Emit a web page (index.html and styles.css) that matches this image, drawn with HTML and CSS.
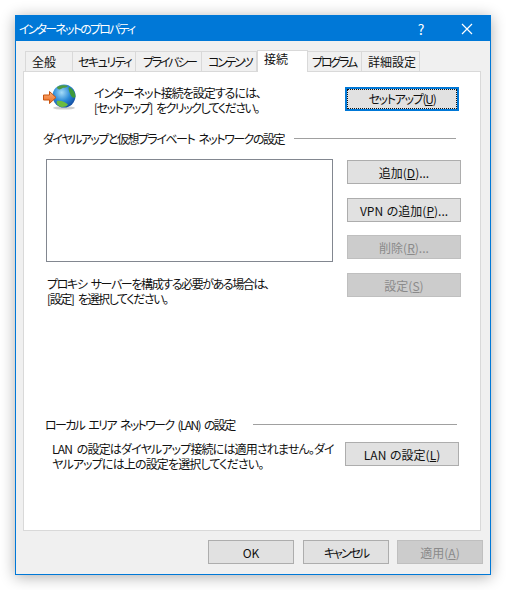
FILE: index.html
```html
<!DOCTYPE html>
<html lang="ja">
<head>
<meta charset="utf-8">
<title>インターネットのプロパティ</title>
<link rel="stylesheet" href="styles.css">
</head>
<body>
<div class="window">
  <header class="titlebar">
    <span class="title">インターネットのプロパティ</span>
    <span class="help">?</span>
    <svg class="close" width="12" height="12" viewBox="0 0 12 12"><path d="M1 1L11 11M11 1L1 11" stroke="#fff" stroke-width="1.2" fill="none"/></svg>
  </header>
  <div class="client">
    <nav class="tabs">
      <span class="tab t1">全般</span>
      <span class="tab t2">セキュリティ</span>
      <span class="tab t3">プライバシー</span>
      <span class="tab t4">コンテンツ</span>
      <span class="tab t5 active">接続</span>
      <span class="tab t6">プログラム</span>
      <span class="tab t7">詳細設定</span>
    </nav>
    <main class="panel">
      <section class="setup">
        <svg class="globe" width="34" height="30" viewBox="0 0 34 30">
          <defs>
            <radialGradient id="sea" cx="0.4" cy="0.35" r="0.75">
              <stop offset="0" stop-color="#a5dcf8"/>
              <stop offset="0.5" stop-color="#2b8ad8"/>
              <stop offset="1" stop-color="#0d3f96"/>
            </radialGradient>
            <linearGradient id="arrow" x1="0" y1="0" x2="0" y2="1">
              <stop offset="0" stop-color="#fbb27c"/>
              <stop offset="1" stop-color="#ee6a1e"/>
            </linearGradient>
          </defs>
          <ellipse cx="22" cy="25" rx="11" ry="1.6" fill="#cfcfcf"/>
          <circle cx="22" cy="13" r="11.5" fill="url(#sea)"/>
          <path d="M15 4C18 2 23 1.5 26 3C24 5.5 21 4 19 6C17 7 15 6 15 4Z" fill="#4f9a3f"/>
          <path d="M27 4C31 6 33.5 10 33.5 14C31.5 16 29 14 28 10.5C27 8 26 6 27 4Z" fill="#3f9a3a"/>
          <path d="M15 18C19 17 24 19.5 26 21.5C24 24.5 19 24.5 17 23C15 22 14 20 15 18Z" fill="#6cbb3f"/>
          <path d="M1.5 12H7.5V8.5L14 14.5L7.5 20.5V17H1.5Z" fill="url(#arrow)" stroke="#c9540f" stroke-width="1"/>
        </svg>
        <p class="setup-text">インターネット接続を設定するには、<br><span class="tight">[セットアップ] をクリックしてください。</span></p>
        <button class="btn wide focused" type="button"><span class="focus">セットアップ(<u>U</u>)</span></button>
      </section>

      <div class="group dial-head"><span>ダイヤルアップと仮想プライベート ネットワークの設定</span><i class="rule"></i></div>

      <section class="dial">
        <div class="dial-left">
          <div class="listbox"></div>
          <p class="proxy">プロキシ サーバーを構成する必要がある場合は、<br>[設定] を選択してください。</p>
        </div>
        <div class="dial-buttons">
          <button class="btn side" type="button">追加(<u>D</u>)...</button>
          <button class="btn side" type="button">VPN の追加(<u>P</u>)...</button>
          <button class="btn side off" type="button">削除(<u>R</u>)...</button>
          <button class="btn side off" type="button">設定(<u>S</u>)</button>
        </div>
      </section>

      <div class="group lan-head"><span>ローカル エリア ネットワーク (LAN) の設定</span><i class="rule"></i></div>

      <section class="lan">
        <p class="lan-text">LAN の設定はダイヤルアップ接続には適用されません。ダイ<br>ヤルアップには上の設定を選択してください。</p>
        <button class="btn wide" type="button">LAN の設定(<u>L</u>)</button>
      </section>
    </main>
    <footer class="actions">
      <button class="btn act" type="button">OK</button>
      <button class="btn act cancel" type="button">キャンセル</button>
      <button class="btn act off" type="button">適用(<u>A</u>)</button>
    </footer>
  </div>
</div>
</body>
</html>
```
FILE: styles.css
```css
* { box-sizing: border-box; }
html, body { margin: 0; padding: 0; background: #fff; }
body {
  width: 506px;
  height: 590px;
  padding: 15px;
  overflow: hidden;
  font-family: "Noto Sans CJK JP", "Noto Sans", sans-serif;
  font-feature-settings: "palt";
  font-size: 12px;
  line-height: 15px;
  color: #111;
  word-spacing: 3px;
}
p { margin: 0; }
.window {
  width: 476px;
  height: 560px;
  border: 1px solid #0078d7;
  background: #f0f0f0;
  box-shadow: 0 2px 14px rgba(0,0,0,.32);
  display: flex;
  flex-direction: column;
}
.titlebar {
  height: 25px;
  background: #0078d7;
  color: #fff;
  display: flex;
  align-items: center;
  padding-left: 3px;
  flex: none;
}
.title { flex: 1; letter-spacing: -1.8px; }
.help { width: 14px; font-size: 14px; margin-right: 33px; margin-top: 2px; text-align: center; }
.close { margin-right: 17px; }
.client { flex: 1; display: flex; flex-direction: column; padding: 10px 9px 9px 7px; }
.tabs { display: flex; height: 20px; align-items: flex-end; padding-left: 2px; position: relative; z-index: 1; }
.tab {
  height: 20px;
  border: 1px solid #d9d9d9;
  border-left: 0;
  border-bottom: 0;
  padding-left: 7px;
  line-height: 19px;
  background: #f0f0f0;
  white-space: nowrap;
}
.tab:first-child { border-left: 1px solid #d9d9d9; }
.t1 { width: 48px; padding-left: 6px; }
.t2 { width: 63px; letter-spacing: -1.5px; padding-left: 5px; }
.t3 { width: 66px; letter-spacing: -2.2px; }
.t4 { width: 55px; letter-spacing: -2.3px; padding-left: 6px; }
.t5 { width: 51px; height: 22px; margin-bottom: -1px; background: #fff; border-left: 1px solid #d9d9d9; padding-left: 6px; line-height: 16px; }
.t6 { width: 54px; letter-spacing: -2.2px; padding-left: 4px; }
.t7 { width: 58px; padding-left: 6px; }
.panel {
  width: 458px;
  height: 460px;
  background: #fff;
  border: 1px solid #d9d9d9;
  padding: 15px 21px 0 18px;
}
.btn {
  display: block;
  font: inherit;
  font-feature-settings: "palt";
  color: #111;
  background: #e1e1e1;
  border: 1px solid #adadad;
  border-radius: 0;
  padding: 0;
  margin: 0;
  height: 24px;
  text-align: center;
  white-space: nowrap;
  word-spacing: 1px;
}
.btn u { text-underline-offset: 1px; }
.btn.off { background: #cccccc; border-color: #bfbfbf; color: #8a8a8a; }
.wide { width: 114px; }
.focused { border: 2px solid #0078d7; padding: 0; }
.focus { display: block; height: 20px; line-height: 17px; border: 1px dotted #111; letter-spacing: -1.3px; }
.setup { display: flex; align-items: flex-start; }
.globe { margin-top: -4px; flex: none; }
.setup-text { margin-left: 18px; margin-top: -2px; width: 251px; flex: none; white-space: nowrap; letter-spacing: -1px; }
.tight { letter-spacing: -1.5px; }
.group { display: flex; align-items: center; }
.group span { white-space: nowrap; }
.rule { flex: 1; height: 1px; background: #a0a0a0; margin-left: 10px; }
.dial-head { margin-top: 16px; margin-left: 1px; margin-right: 3px; letter-spacing: -1.5px; }
.dial { display: flex; margin-top: 13px; margin-left: 4px; }
.dial-left { width: 301px; flex: none; }
.listbox { width: 287px; height: 103px; border: 1px solid #828790; background: #fff; }
.proxy { margin-left: 1px; margin-top: 14px; white-space: nowrap; letter-spacing: -1.4px; }
.dial-buttons { display: flex; flex-direction: column; gap: 14px; margin-top: 1px; }
.side { width: 114px; }
.dial-buttons .side:nth-child(3) { margin-top: -1px; }
.lan-head { margin-top: 111px; margin-left: 3px; margin-right: 2px; letter-spacing: -1.65px; }
.lan-head .rule { margin-left: 18px; }
.lan { display: flex; align-items: flex-start; margin-top: 10px; margin-left: 10px; }
.lan-text { width: 293px; flex: none; white-space: nowrap; letter-spacing: -.85px; margin-top: -1px; }
.actions { display: flex; justify-content: flex-end; gap: 9px; margin-top: 9px; margin-right: -2px; }
.act { width: 86px; }
.act:nth-child(3) { margin-left: -1px; }
.cancel { letter-spacing: -2px; }
```
